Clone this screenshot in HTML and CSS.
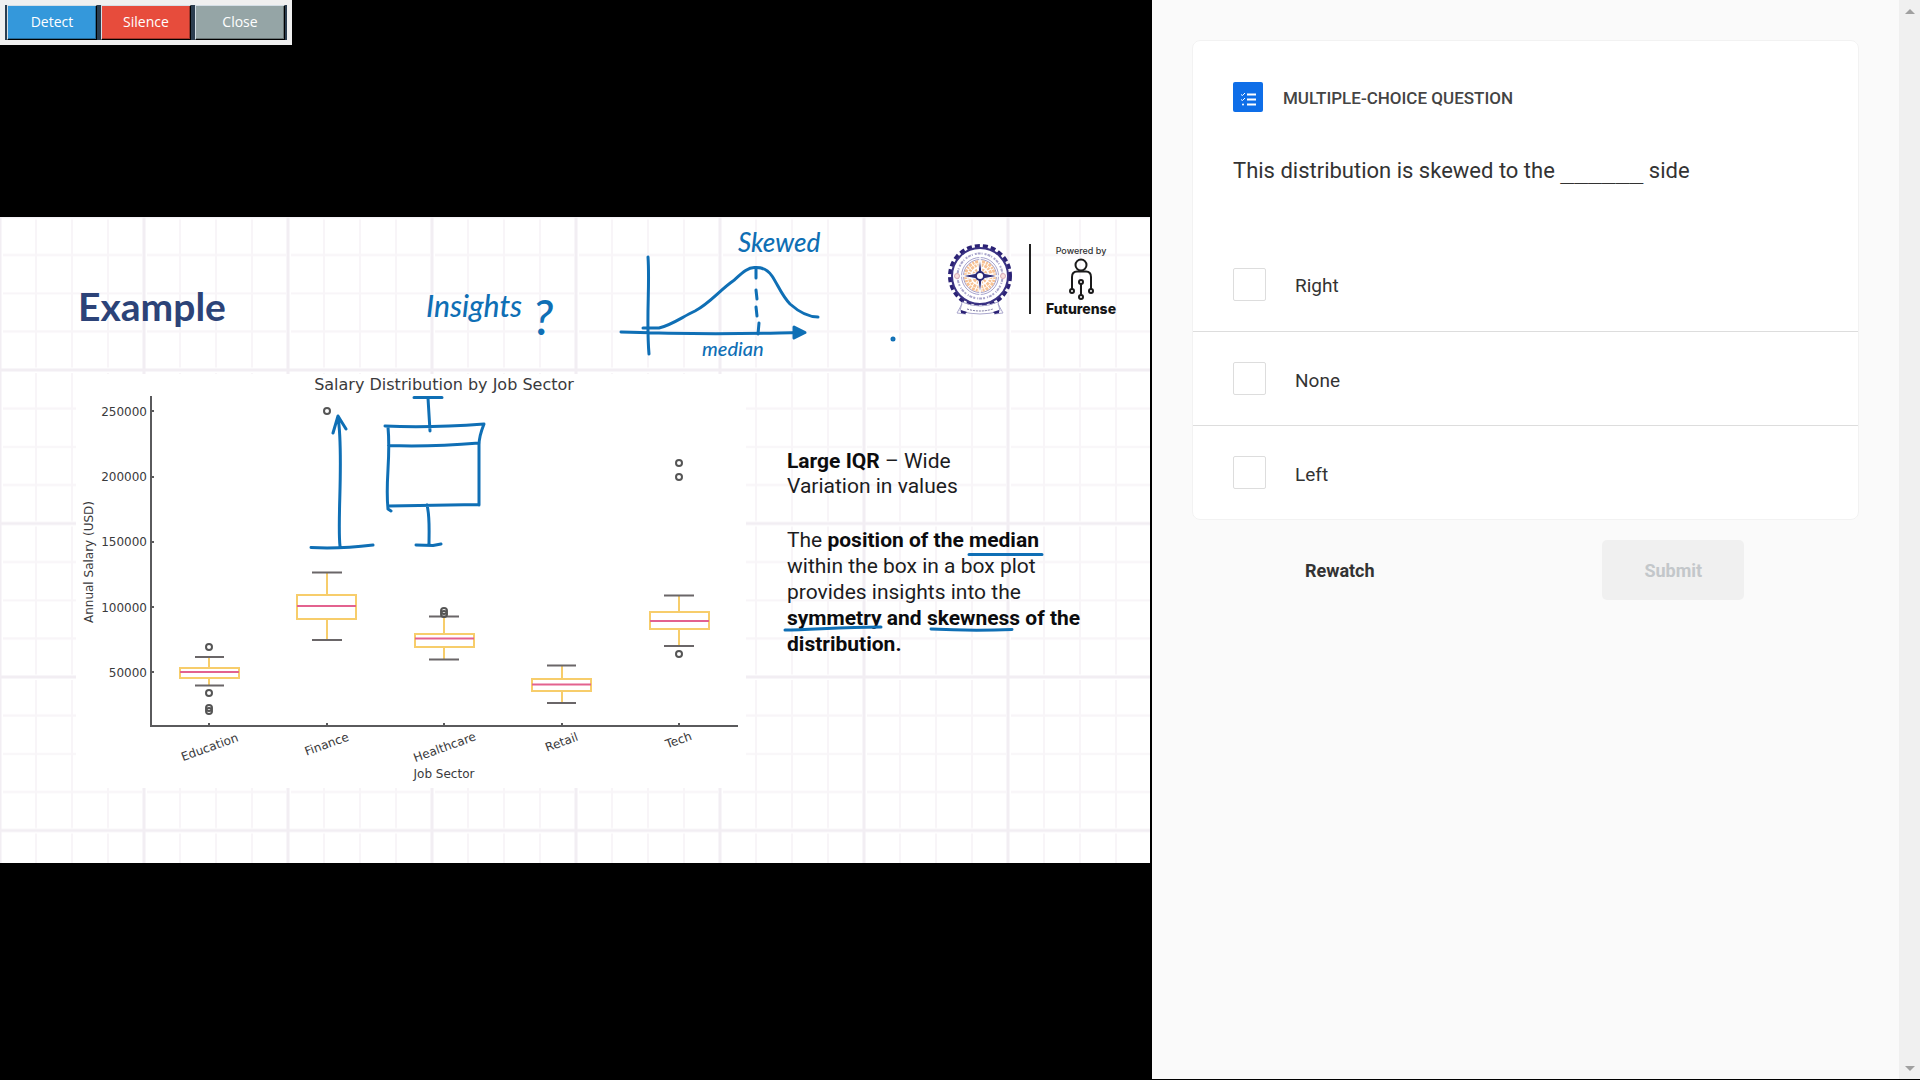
FILE: index.html
```html
<!DOCTYPE html>
<html lang="en">
<head>
<meta charset="utf-8">
<meta name="viewport" content="width=device-width, initial-scale=1">
<title>Multiple-choice question</title>
<link rel="stylesheet" href="styles.css">
</head>
<body>
<div class="app">
  <main class="video">
    <svg class="slide" viewBox="0 217 1150 646" role="img" aria-label="Lecture slide: salary distribution by job sector">
      <defs>
        <pattern id="grid" x="0" y="370" width="144" height="153.5" patternUnits="userSpaceOnUse">
          <path class="grid-minor" d="M36 3V151M72 3V151M108 3V151M3 38.5H142M3 77H142M3 115H142"/>
          <path class="grid-major" d="M0 0V154M144 0V154M0 0H144M0 153.5H144"/>
        </pattern>
      </defs>
      <rect class="paper" x="0" y="217" width="1150" height="646"/>
      <rect x="0" y="217" width="1150" height="646" fill="url(#grid)"/>
      <rect class="paper" x="76" y="374" width="670" height="414"/>

      <text class="heading" x="78" y="321">Example</text>

      <!-- institute crest -->
      <g transform="translate(980 276)">
        <circle class="gear-teeth" r="30"/>
        <circle class="gear-ring" r="28"/>
        <circle class="crest-words" r="22.500"/>
        <circle class="crest-thin" r="18.500"/>
        <circle class="crest-thin" r="16.500"/>
        <circle class="crest-leaf" r="11"/>
        <circle class="crest-leaf" r="6.500"/>
        <circle class="crest-leaf" r="14.500"/>
        <path class="crest-star" d="M0-19L2-3L19 0L2 3L0 19L-2 3L-19 0L-2-3Z"/>
        <circle class="crest-hub" r="4"/>
        <circle class="crest-boss" cx="-23" r="2.500"/>
        <circle class="crest-boss" cx="23" r="2.500"/>
        <path class="ribbon" d="M-18 26Q0 34 18 26L20 35Q0 41-20 35ZM-18 28L-23 37L-14 38M18 28L23 37L14 38"/>
        <path class="ribbon-fold" d="M-19 34L-13 36L-15 38L-19 37ZM19 34L13 36L15 38L19 37Z"/>
        <path class="ribbon-words" d="M-13 33Q0 37 13 33"/>
      </g>
      <path class="logo-rule" d="M1030 244V314"/>
      <text class="powered" x="1081" y="254">Powered by</text>
      <g class="person">
        <circle cx="1081" cy="265" r="5.500"/>
        <path d="M1072 289V277Q1072 271.500 1077 271.500H1086Q1091 271.500 1091 277V289M1081 284V295"/>
        <circle cx="1072" cy="291" r="2"/><circle cx="1091" cy="291" r="2"/>
        <circle cx="1081" cy="282" r="2"/><circle cx="1081" cy="297" r="2"/>
      </g>
      <text class="futurense" x="1081" y="314">Futurense</text>

      <!-- box plot -->
      <text class="chart-title" x="444" y="390">Salary Distribution by Job Sector</text>
      <path class="axis" d="M151 396V726H738M151 411H154M151 477H154M151 542H154M151 607H154M151 672H154M209 726V723M327 726V723M444 726V723M562 726V723M679 726V723"/>
      <g class="tick-y">
        <text x="147" y="416">250000</text><text x="147" y="481">200000</text>
        <text x="147" y="546">150000</text><text x="147" y="612">100000</text><text x="147" y="677">50000</text>
      </g>
      <g class="tick-x">
        <text transform="translate(211 751) rotate(-20)">Education</text>
        <text transform="translate(328 748) rotate(-20)">Finance</text>
        <text transform="translate(446 751) rotate(-20)">Healthcare</text>
        <text transform="translate(563 746) rotate(-20)">Retail</text>
        <text transform="translate(680 744) rotate(-20)">Tech</text>
        <text x="444" y="778">Job Sector</text>
        <text transform="translate(93 562) rotate(-90)">Annual Salary (USD)</text>
      </g>
      <path class="box" d="M180 668H239V678H180ZM209 668V657M209 678V685M297 595H356V619H297ZM327 595V573M327 619V640M415 634H474V647H415ZM444 634V617M444 647V660M532 679H591V691H532ZM562 679V666M562 691V703M650 612H709V629H650ZM679 612V596M679 629V646M297 595V619M415 634V647M532 679V691M650 612V629"/>
      <path class="median" d="M180 672H239M297 606H356M415 638.500H474M532 684.500H591M650 621H709"/>
      <path class="cap" d="M195 657H224M195 685.500H224M312 572.500H342M312 640H342M429 616.500H459M429 659.500H459M547 665.500H576M547 703H576M664 595.500H694M664 646H694"/>
      <g class="outlier">
        <circle cx="209" cy="647" r="3"/><circle cx="209" cy="693" r="3"/><circle cx="209" cy="708" r="3"/><circle cx="209" cy="711" r="3"/>
        <circle cx="327" cy="411" r="3"/><circle cx="444" cy="611" r="3"/><circle cx="444" cy="614" r="3"/>
        <circle cx="679" cy="463" r="3"/><circle cx="679" cy="477" r="3"/><circle cx="679" cy="654" r="3"/>
      </g>

      <!-- notes -->
      <g class="notes">
        <text x="787" y="468"><tspan class="strong">Large IQR</tspan> – Wide</text>
        <text x="787" y="493">Variation in values</text>
        <text x="787" y="547">The <tspan class="strong">position of the median</tspan></text>
        <text x="787" y="573">within the box in a box plot</text>
        <text x="787" y="599">provides insights into the</text>
        <text class="strong" x="787" y="625">symmetry and skewness of the</text>
        <text class="strong" x="787" y="651">distribution.</text>
      </g>

      <!-- pen annotations -->
      <g class="pen">
        <path d="M648 257C650 285 646 320 649 354M621 332Q700 335 779 333L803 332.500"/>
        <path class="pen-fill" d="M794 327L805 332.500L794 338Z"/>
        <path d="M643 328H659C672 325 682 317 695 311C710 303 720 290 733 281C742 273 748 267 755 267.500C763 267 768 270 772 276C778 285 782 296 790 304C799 312 808 317 818 317"/>
        <path d="M756 268V278M756 290L757 299M756 307L757 316M759 323L758 334"/>
        <path d="M311 547.500Q340 549 373 545M340 546C337 520 344 455 338 417M333 433L338 416L346 429"/>
        <path d="M414 397.500H442M428 398L430 431M385 426Q430 428 484 424C480 434 479 438 479 445V505M388.500 445.500Q430 447 479 443M388 427C391 460 385 480 388 509L391 511M389 506L479 504.500M427 505C430 517 429 530 429 544M416 545L433 545.500L441 544"/>
        <path d="M969 554.500H1042M785 630C810 630 840 627 881 627M931 629Q970 631 1012 629.500"/>
        <circle class="pen-fill" cx="893" cy="339" r="1"/>
      </g>
      <g class="handwriting">
        <text class="hand-large" x="426" y="317">Insights</text>
        <text class="hand-mark" x="533" y="335">?</text>
        <text x="738" y="252">Skewed</text>
        <text class="hand-small" x="702" y="356">median</text>
      </g>
    </svg>
    <div class="toolbar">
      <div class="toolbar-row">
        <button class="tool detect" type="button">Detect</button>
        <button class="tool silence" type="button">Silence</button>
        <button class="tool close" type="button">Close</button>
      </div>
    </div>
  </main>

  <section class="quiz">
    <form class="quiz-body">
      <fieldset class="card">
        <div class="card-head">
          <svg class="kind-icon" viewBox="0 0 30 30" aria-hidden="true">
            <rect width="30" height="30" rx="2"/>
            <path d="M14 12.500H23M14 17.500H23M14 22.500H23"/>
            <path class="kind-ticks" d="M8 12.500L9.500 13.500L12 11M8 17.500L9.500 18.500L12 16"/>
            <circle cx="10" cy="22.500" r="1"/>
          </svg>
          <h1 class="kind">MULTIPLE-CHOICE QUESTION</h1>
        </div>
        <p class="question">This distribution is skewed to the <span class="blank">______</span> side</p>
        <label class="option"><input class="check" type="checkbox" name="answer" value="right"><span class="option-text">Right</span></label>
        <label class="option"><input class="check" type="checkbox" name="answer" value="none"><span class="option-text">None</span></label>
        <label class="option"><input class="check" type="checkbox" name="answer" value="left"><span class="option-text">Left</span></label>
      </fieldset>
      <div class="actions">
        <button class="action rewatch" type="button">Rewatch</button>
        <button class="action submit" type="submit" disabled>Submit</button>
      </div>
    </form>
  </section>

  <div class="scrollbar" aria-hidden="true">
    <span class="arrow arrow-up"></span>
    <span class="arrow arrow-down"></span>
  </div>
</div>
</body>
</html>
```
FILE: styles.css
```css
* { box-sizing: border-box; }

body {
  margin: 0;
  background: #000;
  font-family: Roboto, "Liberation Sans", sans-serif;
  color: #333;
}

.app {
  display: grid;
  grid-template-columns: 60% 1fr 21px;
  min-height: 100vh;
  border-bottom: 1px solid #000;
}

/* video pane */
.video {
  position: relative;
  display: flex;
  align-items: center;
  padding-right: 2px;
  background: #000;
}

.slide { display: block; width: 100%; }
.paper { fill: #fff; }
.grid-minor, .grid-major { fill: none; stroke: #f8f5f8; stroke-width: 2; }
.grid-major { stroke: #f2eef3; stroke-width: 3; }

.heading { font: 700 39px Lato, sans-serif; fill: #2c4378; }

.gear-teeth { fill: none; stroke: #2b2275; stroke-width: 4; stroke-dasharray: 5 3; }
.gear-ring { fill: #fff; stroke: #3a3283; stroke-width: 2; }
.crest-words { fill: none; stroke: #aaa6cc; stroke-width: 2; stroke-dasharray: 2 1 3 1 1 2; }
.crest-thin { fill: none; stroke: #a5a1cc; stroke-width: 1; }
.crest-leaf { fill: none; stroke: #f6c193; stroke-width: 3; stroke-dasharray: 3 1 2 1; }
.crest-star { fill: #2b2a78; stroke: #fff; stroke-width: 1; }
.crest-hub { fill: #fff; stroke: #2b2a78; stroke-width: 2; }
.crest-boss { fill: #f9e2df; stroke: #d8a9b5; }
.ribbon { fill: #fff; stroke: #aaa7cd; stroke-width: 1; }
.ribbon-fold { fill: #2b2275; }
.ribbon-words { fill: none; stroke: #77739f; stroke-width: 1; stroke-dasharray: 2 1; }
.logo-rule { stroke: #222; stroke-width: 2; }
.powered { font: 500 9px Inter, sans-serif; fill: #333; text-anchor: middle; }
.futurense { font: 800 14px Inter, sans-serif; fill: #151515; text-anchor: middle; }
.person { fill: none; stroke: #1a1a1a; stroke-width: 2; }

.chart-title { font: 16px "DejaVu Sans", sans-serif; fill: #3a3a3c; text-anchor: middle; }
.tick-y, .tick-x { font: 12px "DejaVu Sans", sans-serif; fill: #3a3a3c; }
.tick-y { text-anchor: end; }
.tick-x { text-anchor: middle; }
.axis { fill: none; stroke: #5a5a5c; stroke-width: 2; }
.box { fill: none; stroke: #f7cd6b; stroke-width: 2; }
.median { stroke: #e3628f; stroke-width: 2; }
.cap { stroke: #6a6668; stroke-width: 2; }
.outlier { fill: none; stroke: #555; stroke-width: 2; }

.notes { font: 21px Roboto, sans-serif; fill: #1c1c1e; }
.strong { font-weight: 700; fill: #0c0c0e; }

.pen { fill: none; stroke: #0f6fb5; stroke-width: 3; stroke-linecap: round; stroke-linejoin: round; }
.pen-fill { fill: #0f6fb5; }
.handwriting { font: italic 500 26px Lato, cursive; fill: #0f6fb5; }
.hand-small { font-size: 20px; }
.hand-large { font-size: 30px; }
.hand-mark { font-size: 48px; }

/* floating toolbar over the video */
.toolbar {
  position: absolute;
  top: 0;
  left: 0;
  padding: 5px;
  background: #f0f0f0;
}

.toolbar-row {
  display: flex;
  gap: 4px;
  padding: 0 2px;
  background: #2c3e50;
}

.tool {
  width: 90px;
  height: 35px;
  padding: 0 0 2px;
  border: 1px solid #000;
  border-top-color: #d5dfe6;
  border-left-color: #d5dfe6;
  box-shadow: inset -1px -1px 0 rgba(0, 0, 0, 0.3);
  font: 14px "Open Sans", sans-serif;
  color: #fff;
}

.detect { background: #3498db; }
.silence { background: #e74c3c; }
.close { background: #95a5a6; }

/* quiz pane */
.quiz { padding: 40px; background: #fafafa; }
.quiz-body { margin: 0; }

.card {
  min-width: 0;
  margin: 0;
  padding: 0;
  background: #fff;
  border: 1px solid #f2f2f2;
  border-radius: 8px;
}

.card-head {
  display: flex;
  align-items: center;
  gap: 20px;
  padding: 40px 40px 0;
}

.kind-icon { width: 30px; height: 30px; fill: #0e6ee8; }
.kind-icon path { fill: none; stroke: #fff; stroke-width: 2; }
.kind-icon .kind-ticks { stroke-width: 1; }
.kind-icon circle { fill: #fff; }
.kind { margin: 0; padding-top: 2px; font-size: 17px; font-weight: 500; line-height: 30px; color: #444; }

.question {
  margin: 0;
  padding: 42px 40px 50px;
  font-size: 22px;
  line-height: 32px;
  color: #333;
}

.blank { font: 23px "DejaVu Sans Mono", monospace; line-height: 24px; }

.option {
  display: flex;
  align-items: center;
  gap: 29px;
  height: 94px;
  padding: 0 40px;
  font-size: 19px;
}

.option + .option { border-top: 1px solid #ddd; }
.option-text { padding-top: 3px; }

.check {
  appearance: none;
  width: 33px;
  height: 33px;
  margin: 0;
  background: #fff;
  border: 1px solid #ddd;
  border-radius: 2px;
}

.actions {
  display: grid;
  grid-template-columns: 1fr 1fr;
  justify-items: center;
  padding: 20px 0;
}

.action {
  width: 142px;
  height: 60px;
  margin-right: 38px;
  border: 0;
  border-radius: 5px;
  font: 700 18px Roboto, sans-serif;
}

.rewatch { background: none; color: #333; }
.submit { background: #f0f0f0; color: #c3c7ca; }

/* scrollbar */
.scrollbar {
  display: flex;
  flex-direction: column;
  align-items: center;
  justify-content: space-between;
  padding: 9px 0 8px;
  background: #f0f0f0;
}

.arrow { border: 5px solid transparent; }
.arrow-up { border-top: 0; border-bottom-color: #a0a0a0; }
.arrow-down { border-bottom: 0; border-top-color: #a0a0a0; }
```
